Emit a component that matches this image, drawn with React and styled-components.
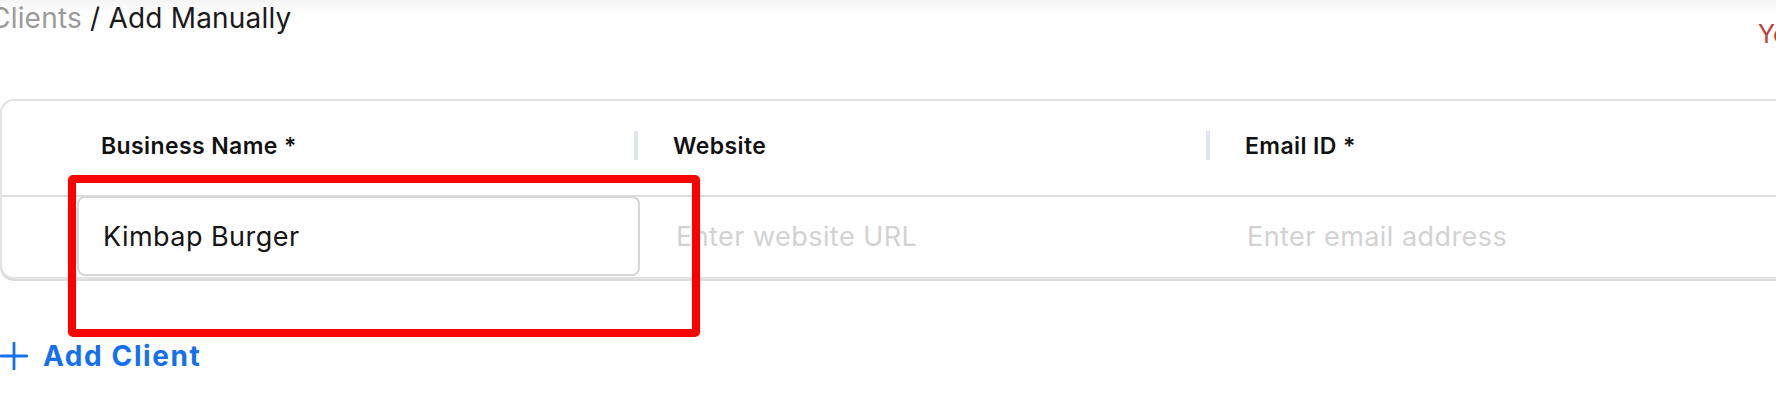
import React from 'react'
import styled, { createGlobalStyle } from 'styled-components'

const GlobalStyle = createGlobalStyle`
  html, body {
    margin: 0;
    padding: 0;
    background: #ffffff;
    overflow: hidden;
  }
  body {
    font-family: Inter, 'Noto Sans', sans-serif;
    color: #161616;
  }
  * { box-sizing: border-box; }
`

const Page = styled.div`
  position: relative;
  width: 1776px;
  height: 412px;
  overflow: hidden;
  background: linear-gradient(#f5f5f5 0px, #ffffff 13px);
`

const TopBar = styled.div`
  display: grid;
  grid-template-columns: 1768px max-content;
  margin-left: -10px;
  height: 99px;
`

const Breadcrumb = styled.div`
  font-size: 28px;
  line-height: 34px;
  letter-spacing: 0.2px;
  padding-top: 1px;
  color: #1a1a1a;
  white-space: nowrap;
  span {
    color: #9a9a9a;
  }
`

const Warning = styled.div`
  font-size: 25px;
  line-height: 30px;
  padding-top: 19px;
  color: #c23b3b;
  white-space: nowrap;
`

const Card = styled.div`
  width: 1900px;
  border: 2px solid #e3e3e3;
  border-radius: 14px;
  box-shadow: 0 2px 0 #dcdcdc;
  background: #ffffff;
`

const Row = styled.div`
  display: grid;
  grid-template-columns: 557px 572px 1fr;
  padding-left: 75px;
`

const HeadRow = styled(Row)`
  height: 96px;
  align-items: center;
  padding-bottom: 5px;
  border-bottom: 2px solid #dedede;
`

const HeadCell = styled.div`
  display: flex;
  align-items: center;
  height: 29px;
  padding-left: ${p => (p.$divider ? '35px' : '24px')};
  border-left: ${p => (p.$divider ? '4px solid #dfe4ee' : 'none')};
  font-size: 23px;
  font-weight: 600;
  letter-spacing: 0.4px;
  color: #111111;
  white-space: nowrap;
`

const BodyRow = styled(Row)`
  height: 81px;
  align-items: start;
  margin-top: -1px;
`

const Field = styled.input`
  font-family: Inter, 'Noto Sans', sans-serif;
  font-size: 27px;
  letter-spacing: 0.45px;
  color: #151515;
  height: 80px;
  width: ${p => (p.$boxed ? '563px' : '100%')};
  padding: 0 0 0 ${p => (p.$boxed ? '24px' : '42px')};
  border: ${p => (p.$boxed ? '2px solid #d6d6d6' : 'none')};
  border-radius: 8px;
  background: transparent;
  outline: none;
  &::placeholder {
    color: #d2d2d2;
  }
`

const AddButton = styled.button`
  display: flex;
  align-items: center;
  gap: 15px;
  margin-top: 61px;
  padding: 0;
  border: none;
  background: none;
  font-family: Inter, 'Noto Sans', sans-serif;
  font-size: 28px;
  line-height: 32px;
  font-weight: 700;
  letter-spacing: 1.6px;
  color: #1570ef;
  cursor: pointer;
`

const Highlight = styled.div`
  position: absolute;
  left: 68px;
  top: 175px;
  width: 632px;
  height: 162px;
  border: 8px solid #ff0000;
  border-radius: 5px;
  pointer-events: none;
`

const PlusIcon = () => (
  <svg width="28" height="28" viewBox="0 0 28 28" fill="none">
    <path d="M14 1v26M1 14h26" stroke="#1570ef" strokeWidth="2.8" strokeLinecap="round" />
  </svg>
)

export default function App() {
  return (
    <Page>
      <GlobalStyle />
      <TopBar>
        <Breadcrumb>
          <span>Clients</span> / Add Manually
        </Breadcrumb>
        <Warning>You have unsaved changes</Warning>
      </TopBar>
      <Card>
        <HeadRow>
          <HeadCell>Business Name *</HeadCell>
          <HeadCell $divider>Website</HeadCell>
          <HeadCell $divider>Email ID *</HeadCell>
        </HeadRow>
        <BodyRow>
          <Field $boxed defaultValue="Kimbap Burger" />
          <Field placeholder="Enter website URL" />
          <Field placeholder="Enter email address" style={{ paddingLeft: 41 }} />
        </BodyRow>
      </Card>
      <AddButton>
        <PlusIcon />
        Add Client
      </AddButton>
      <Highlight />
    </Page>
  )
}
